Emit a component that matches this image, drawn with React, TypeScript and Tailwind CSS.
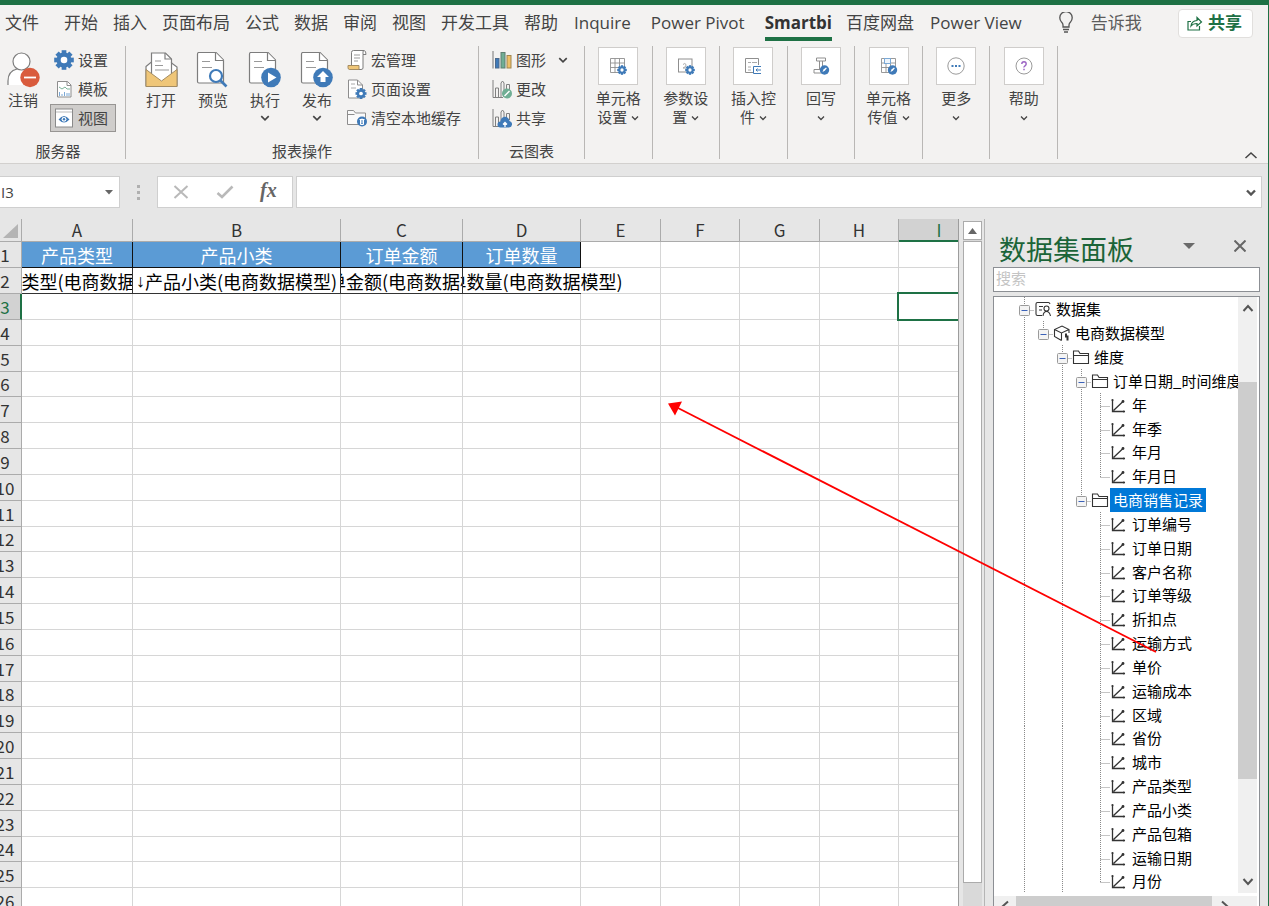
import React from 'react';

const UI_FONT = "font-['Open_Sans','Noto_Sans_CJK_SC',sans-serif]";
const CELL_FONT = "font-['Noto_Sans_CJK_SC',sans-serif]";

const BLUE = '#3f7ab8';
const LINE = '#7d7d7d';

function Chevron({ className = 'h-2 w-2' }: { className?: string }) {
  return (
    <svg viewBox="0 0 8 8" className={className} fill="none" stroke="#444" strokeWidth="1.300">
      <path d="M1 2.5 4 5.5 7 2.5" />
    </svg>
  );
}

function Gear({ cx, cy, r, hole = '#fff' }: { cx: number; cy: number; r: number; hole?: string }) {
  return (
    <g fill={BLUE}>
      <circle cx={cx} cy={cy} r={r * 0.76} />
      {[0, 45, 90, 135].map((a) => (
        <rect
          key={a}
          x={cx - r * 0.24}
          y={cy - r}
          width={r * 0.48}
          height={r * 2}
          transform={`rotate(${a} ${cx} ${cy})`}
        />
      ))}
      <circle cx={cx} cy={cy} r={r * 0.34} fill={hole} />
    </g>
  );
}

/* ---------- large ribbon icons, 36 x 36 ---------- */

function LogoutIcon() {
  return (
    <svg viewBox="0 0 36 36" className="h-9 w-9">
      <path d="M3 33V28q0-9 8-11M11 17q5 3 10 0l4 4-4 12H3" fill="#fff" stroke="none" />
      <path d="M3 33v-4q0-10 9-12" fill="none" stroke={LINE} strokeWidth="1.2" />
      <circle cx="16.500" cy="9.500" r="8.500" fill="#fff" stroke={LINE} strokeWidth="1.2" />
      <circle cx="25" cy="25.500" r="9.700" fill="#d95b3d" />
      <path d="M19 25.500h12" stroke="#fff" strokeWidth="1.8" />
    </svg>
  );
}

function PageBase() {
  return (
    <g>
      <path d="M2.500 2q0-1.500 1.500-1.500h17l7.500 7.500v23H4q-1.500 0-1.500-1.500z" fill="#fff" stroke={LINE} strokeWidth="1.2" />
      <path d="M20.500.5v8h8" fill="#fff" stroke={LINE} strokeWidth="1.2" />
      <path d="M7 9.500h8M7 15.500h10" stroke="#999" strokeWidth="1" />
    </g>
  );
}

function OpenIcon() {
  return (
    <svg viewBox="0 0 36 36" className="h-9 w-9">
      <path d="M3 14.500 8.500 10v-9h14l6 6v4l5.500 4v19H3z" fill="#fff" stroke={LINE} strokeWidth="1.2" />
      <path d="M8.500 10v13M28.500 10v12M22 1v6h6" fill="none" stroke={LINE} strokeWidth="1.2" />
      <path d="M12 9h6M12 13.500h8M12 18h14" stroke="#999" />
      <path d="M3 17.500 18.500 29 34 17.500V34.500H3z" fill="#efc678" stroke="#a48c62" />
    </svg>
  );
}

function PreviewIcon() {
  return (
    <svg viewBox="0 0 36 36" className="h-9 w-9">
      <PageBase />
      <circle cx="21" cy="24" r="6" fill="#fff" stroke={BLUE} strokeWidth="2.200" />
      <path d="m25.500 28.500 6 6" stroke={BLUE} strokeWidth="2.600" />
    </svg>
  );
}

function RunIcon() {
  return (
    <svg viewBox="0 0 36 36" className="h-9 w-9">
      <PageBase />
      <circle cx="24" cy="25.500" r="9.800" fill={BLUE} />
      <path d="m21 20.500 8.500 5-8.500 5z" fill="#fff" />
    </svg>
  );
}

function PublishIcon() {
  return (
    <svg viewBox="0 0 36 36" className="h-9 w-9">
      <PageBase />
      <circle cx="24" cy="25.500" r="9.800" fill={BLUE} />
      <path d="m24 19 6 6h-3.500v5h-5v-5H18z" fill="#fff" />
    </svg>
  );
}

/* ---------- small ribbon icons, 20 x 20 ---------- */

function SettingsIcon() {
  return (
    <svg viewBox="0 0 20 20" className="h-5 w-5">
      <Gear cx={10} cy={10} r={9.8} />
    </svg>
  );
}

function TemplateIcon() {
  return (
    <svg viewBox="0 0 20 20" className="h-5 w-5">
      <path d="M3.500 2.500h10l3.500 3.500v12H3.500z" fill="#fff" stroke="#8d8d8d" />
      <path d="M13 2.500v4h4" fill="none" stroke="#8d8d8d" />
      <path d="m5 8 3 2 3-2 2 2h3" fill="none" stroke="#7db39a" />
      <path d="M5.500 17v-4M8 17v-2M10.500 17v-4M13 17v-3M15 17v-3" stroke="#7ba9d6" />
    </svg>
  );
}

function ViewIcon() {
  return (
    <svg viewBox="0 0 20 20" className="h-5 w-5">
      <rect x="1.500" y="1" width="17" height="18" fill="#fff" stroke="#8a8a8a" />
      <path d="M2 4h16" stroke="#bbb" />
      <path d="M4.500 11.500q5.500-7 11 0-5.500 6-11 0z" fill={BLUE} />
      <circle cx="10" cy="11.300" r="2.400" fill="#fff" />
      <circle cx="10" cy="11.300" r="1.200" fill={BLUE} />
    </svg>
  );
}

function MacroIcon() {
  return (
    <svg viewBox="0 0 20 20" className="h-5 w-5">
      <path d="M4.500 15V2.500q0-2 2-2H17q2 0 2 4h-3V18q0 1.500-2 1.500H2.500" fill="#fff" stroke={LINE} />
      <path d="M16 4.500V2q0-1.500 1-1.500" fill="none" stroke={LINE} />
      <path d="M1 15.500h11v4H2.500q-1.500 0-1.500-2z" fill="#efc678" stroke="#a48c62" />
      <path d="M7 5h6M7 8h6M7 11h4" stroke="#999" />
    </svg>
  );
}

function PageSetupIcon() {
  return (
    <svg viewBox="0 0 20 20" className="h-5 w-5">
      <path d="M1.500 1h9l5 5v13h-14z" fill="#fff" stroke="#8d8d8d" />
      <path d="M10.500 1v5h5" fill="none" stroke="#8d8d8d" />
      <path d="M4 5h4M4 9h5" stroke="#aaa" />
      <Gear cx={14} cy={14.5} r={5.5} />
    </svg>
  );
}

function ClearCacheIcon() {
  return (
    <svg viewBox="0 0 20 20" className="h-5 w-5">
      <path d="M.5 16.500v-14h6l2 2.500h10v11.500z" fill="#fafafa" stroke="#8d8d8d" />
      <path d="M.5 6.500h7" stroke="#8d8d8d" />
      <circle cx="15" cy="13.500" r="5" fill={BLUE} />
      <path d="M12.500 11.500h5M13.500 12v4.500h3V12M15 10.500v5" fill="none" stroke="#fff" />
    </svg>
  );
}

function ChartIcon() {
  return (
    <svg viewBox="0 0 20 20" className="h-5 w-5">
      <path d="M1 1v17.500" stroke="#777" />
      <rect x="3.500" y="8.500" width="3.500" height="9.500" fill={BLUE} stroke="#4c6a8c" />
      <rect x="9" y="2.500" width="4" height="15.500" fill="#6fae94" stroke="#5e7f72" />
      <rect x="15" y="5.500" width="4" height="12.500" fill="#efc067" stroke="#a08650" />
    </svg>
  );
}

function OutlineBars() {
  return (
    <g fill="none" stroke="#808080">
      <path d="M1 1v17.500h10" />
      <path d="M3.500 18V9h3v9M9 18V4l1.500-2L12 4v14M14.500 12V5.500h3V12" />
    </g>
  );
}

function ChangeIcon() {
  return (
    <svg viewBox="0 0 20 20" className="h-5 w-5">
      <OutlineBars />
      <circle cx="15" cy="14.500" r="5" fill="#6fae94" />
      <path d="m12.500 17 5-5" stroke="#fff" strokeWidth="1.500" />
    </svg>
  );
}

function ShareCloudIcon() {
  return (
    <svg viewBox="0 0 20 20" className="h-5 w-5">
      <OutlineBars />
      <path d="M8.500 19.500a3 3 0 0 1 0-6 4.500 4.500 0 0 1 9-.5 3.300 3.300 0 0 1-.5 6.500z" fill={BLUE} />
      <path d="M13 19v-4M11 16.500l2-2 2 2" fill="none" stroke="#fff" strokeWidth="1.300" />
    </svg>
  );
}

/* ---------- boxed group icons, 18 x 18 ---------- */

function CellGrid() {
  return (
    <path
      d="M1.500 1.500h14v14h-14zM1.500 6h14M1.500 10.500h14M6 1.500v14M10.500 1.500v14"
      fill="#fff"
      stroke="#8f8f8f"
      strokeWidth=".9"
    />
  );
}

function CellSetIcon() {
  return (
    <svg viewBox="0 0 18 18" className="h-[18px] w-[18px]">
      <CellGrid />
      <Gear cx={13} cy={13} r={4.8} />
    </svg>
  );
}

function ParamIcon() {
  return (
    <svg viewBox="0 0 18 18" className="h-[18px] w-[18px]">
      <rect x="1.500" y="2" width="13.500" height="13" fill="#fff" stroke="#8f8f8f" />
      <path d="M6 7.500q2-2 3 0t-3 3.500h3" fill="none" stroke="#aaa" />
      <Gear cx={13} cy={13} r={4.8} />
    </svg>
  );
}

function ControlIcon() {
  return (
    <svg viewBox="0 0 18 18" className="h-[18px] w-[18px]">
      <path d="M9 15.500H1.500v-14h13V8" fill="#fff" stroke="#8f8f8f" />
      <path d="M4 5.500h3M8 5.500h5M4 10h3M4 13h3" stroke="#aaa" />
      <path d="M17 9.500H9.500v7H17M17 13h-5M13.500 11.500 12 13l1.500 1.500" fill="none" stroke={BLUE} />
    </svg>
  );
}

function PenBadge() {
  return (
    <g>
      <circle cx="12.500" cy="13" r="4.700" fill={BLUE} />
      <path d="m10.500 15 1-2.500 2.500-2 .8.8-2 2.500z" fill="#fff" />
    </g>
  );
}

function WriteBackIcon() {
  return (
    <svg viewBox="0 0 18 18" className="h-[18px] w-[18px]">
      <path d="M4.500 1h9v3h-9zM7.500 4v8.500M10.500 4v5M8 12.500H2v3.500h7" fill="none" stroke="#8f8f8f" />
      <PenBadge />
    </svg>
  );
}

function CellPassIcon() {
  return (
    <svg viewBox="0 0 18 18" className="h-[18px] w-[18px]">
      <CellGrid />
      <rect x="4.500" y="1.500" width="6" height="5" fill="#eef5fc" stroke="#7ba9d6" />
      <PenBadge />
    </svg>
  );
}

function MoreIcon() {
  return (
    <svg viewBox="0 0 18 18" className="h-[18px] w-[18px]">
      <circle cx="9" cy="9" r="8.200" fill="#fff" stroke="#8f8f8f" strokeWidth=".9" />
      <path d="M4.500 9h2M8 9h2M11.500 9h2" stroke={BLUE} strokeWidth="2" />
    </svg>
  );
}

function HelpIcon() {
  return (
    <svg viewBox="0 0 18 18" className="h-[18px] w-[18px]">
      <circle cx="9" cy="9" r="8" fill="#fff" stroke="#8f8f8f" strokeWidth=".9" />
      <path d="M6.800 7q0-2.200 2.200-2.200T11.200 7q0 1-1.200 1.800T9 10.500" fill="none" stroke="#9b64c4" strokeWidth="1.400" />
      <path d="M9 11.800v1.500" stroke="#9b64c4" strokeWidth="1.500" />
    </svg>
  );
}

/* ---------- ribbon ---------- */

const TABS = [
  '开始', '插入', '页面布局', '公式', '数据', '审阅', '视图', '开发工具', '帮助',
];
const ADDIN_TABS = ['Inquire', 'Power Pivot', 'Smartbi'];
const EXTRA_TABS = ['百度网盘', 'Power View'];

function Tab({ label }: { label: string }) {
  if (label === 'Smartbi') {
    return (
      <button className="h-9 border-b-4 border-[#1e7145] pt-1 font-bold text-[#333]">{label}</button>
    );
  }
  return <button className="h-9">{label}</button>;
}

function TabBar() {
  return (
    <nav className="flex h-9 items-center pr-[15px] pl-[5px] text-[17px] leading-6 whitespace-nowrap text-[#444]">
      <button className="mr-[25px]">文件</button>
      <div className="flex gap-[15px]">
        {TABS.map((t) => (
          <Tab key={t} label={t} />
        ))}
      </div>
      <div className="ml-4 flex gap-5">
        {ADDIN_TABS.map((t) => (
          <Tab key={t} label={t} />
        ))}
      </div>
      <div className="ml-[14px] flex gap-4">
        {EXTRA_TABS.map((t) => (
          <Tab key={t} label={t} />
        ))}
      </div>
      <button className="ml-9 flex items-center gap-[17px] text-[#5c5c5c]">
        <svg viewBox="0 0 16 22" className="h-[22px] w-4" fill="none" stroke="#555" strokeWidth="1.300">
          <path d="M5 15v-2q0-1.500-1.500-3A6.200 6.200 0 1 1 12.500 10Q11 11.500 11 13v2zM5 17.500h6M6 20h4" />
        </svg>
        告诉我
      </button>
      <button className="ml-auto flex h-[29px] items-center gap-[5px] rounded border border-[#e1dfdd] bg-white pr-[10px] pl-2 font-bold text-[#1e7145]">
        <svg viewBox="0 0 16 16" className="h-4 w-4" fill="none" stroke="#1e7145" strokeWidth="1.200">
          <path d="M4 6.500H1v8.500h11.500v-4M4 11q.5-5 6-5.500V2.500L14.500 7 10 11V8.500Q6 8.500 4 11z" />
        </svg>
        共享
      </button>
    </nav>
  );
}

function Group({ title, className, children }: { title?: string; className: string; children: React.ReactNode }) {
  return (
    <section className={`flex shrink-0 flex-col border-r border-[#b9b7b5] ${className}`}>
      <div className="flex flex-1">{children}</div>
      {title && <h2 className="text-center leading-4">{title}</h2>}
    </section>
  );
}

function BigButton({ icon, label, menu }: { icon: React.ReactNode; label: string; menu?: boolean }) {
  return (
    <button className="flex h-[86px] w-[52px] flex-col items-center gap-[3px] pt-[6px] leading-[18px]">
      {icon}
      {label}
      {menu && <Chevron className="mt-px h-2.5 w-2.5" />}
    </button>
  );
}

function SmallButton({ icon, label, active, menu }: { icon: React.ReactNode; label: string; active?: boolean; menu?: boolean }) {
  return (
    <button
      className={`flex h-7 items-center gap-1 border px-[3px] whitespace-nowrap ${
        active ? 'border-[#979593] bg-[#cfcdcb]' : 'border-transparent'
      }`}
    >
      {icon}
      {label}
      {menu && <Chevron className="ml-2 h-2.5 w-2.5" />}
    </button>
  );
}

function BoxButton({ icon, lines }: { icon: React.ReactNode; lines: string[] }) {
  return (
    <div className="flex flex-1 justify-center border-r border-[#b9b7b5]">
      <button className="flex flex-col items-center self-start pt-px leading-[19px]">
        <span className="mb-1 flex h-[38px] w-10 items-center justify-center border border-[#cfcdcb] bg-white">
          {icon}
        </span>
        <span>{lines[0]}</span>
        <span className="flex h-[19px] items-center gap-1">
          {lines[1]}
          <Chevron />
        </span>
      </button>
    </div>
  );
}

function Ribbon() {
  return (
    <div className="flex border-b border-[#d2d0ce] pt-[5px] pb-1 text-[15px] text-[#444]">
      <div className="flex h-[113px] flex-1">
        <Group title="服务器" className="w-[126px] pr-[9px]">
          <div className="-ml-[3px]">
            <BigButton icon={<LogoutIcon />} label="注销" />
          </div>
          <div className="ml-px flex flex-1 flex-col gap-px">
            <SmallButton icon={<SettingsIcon />} label="设置" />
            <SmallButton icon={<TemplateIcon />} label="模板" />
            <SmallButton icon={<ViewIcon />} label="视图" active />
          </div>
        </Group>
        <Group title="报表操作" className="w-[353px]">
          <div className="ml-[9px] flex">
            <BigButton icon={<OpenIcon />} label="打开" />
            <BigButton icon={<PreviewIcon />} label="预览" />
            <BigButton icon={<RunIcon />} label="执行" menu />
            <BigButton icon={<PublishIcon />} label="发布" menu />
          </div>
          <div className="flex flex-col gap-px">
            <SmallButton icon={<MacroIcon />} label="宏管理" />
            <SmallButton icon={<PageSetupIcon />} label="页面设置" />
            <SmallButton icon={<ClearCacheIcon />} label="清空本地缓存" />
          </div>
        </Group>
        <Group title="云图表" className="w-[106px]">
          <div className="ml-[9px] flex flex-col gap-px">
            <SmallButton icon={<ChartIcon />} label="图形" menu />
            <SmallButton icon={<ChangeIcon />} label="更改" />
            <SmallButton icon={<ShareCloudIcon />} label="共享" />
          </div>
        </Group>
        <div className="flex w-[473px] shrink-0">
          <BoxButton icon={<CellSetIcon />} lines={['单元格', '设置']} />
          <BoxButton icon={<ParamIcon />} lines={['参数设', '置']} />
          <BoxButton icon={<ControlIcon />} lines={['插入控', '件']} />
          <BoxButton icon={<WriteBackIcon />} lines={['回写', '']} />
          <BoxButton icon={<CellPassIcon />} lines={['单元格', '传值']} />
          <BoxButton icon={<MoreIcon />} lines={['更多', '']} />
          <BoxButton icon={<HelpIcon />} lines={['帮助', '']} />
        </div>
        <button aria-label="折叠功能区" className="mr-[10px] ml-auto self-end">
          <svg viewBox="0 0 14 8" className="h-2 w-[14px]" fill="none" stroke="#444" strokeWidth="1.500">
            <path d="m1.500 7 5.500-5L12.500 7" />
          </svg>
        </button>
      </div>
    </div>
  );
}

function FormulaBar() {
  return (
    <div className="flex h-[55px] items-start bg-[#e6e6e6] pt-3 pr-[6px]">
      <div className="flex h-8 w-[120px] items-center border border-l-0 border-[#cfcfcf] bg-white pr-[6px]">
        <input aria-label="名称框" defaultValue="I3" className="w-full min-w-0 bg-transparent pl-px text-[15px] text-[#444] outline-none" />
        <svg viewBox="0 0 8 5" className="h-[5px] w-2 shrink-0" fill="#666">
          <path d="M0 0h8L4 4.500z" />
        </svg>
      </div>
      <div className="flex h-8 w-[37px] flex-col items-center justify-center gap-[3px]">
        <i className="h-[3px] w-[3px] bg-[#b0b0b0]" />
        <i className="h-[3px] w-[3px] bg-[#b0b0b0]" />
        <i className="h-[3px] w-[3px] bg-[#b0b0b0]" />
      </div>
      <div className="mr-[3px] flex h-8 w-[136px] items-center justify-around border border-[#cfcfcf] bg-white px-[2px]">
        <button aria-label="取消">
          <svg viewBox="0 0 16 14" className="h-[14px] w-4" stroke="#b9b9b9" strokeWidth="2" fill="none">
            <path d="m1.500 1 13 12M14.500 1l-13 12" />
          </svg>
        </button>
        <button aria-label="输入">
          <svg viewBox="0 0 18 14" className="h-[14px] w-[18px]" stroke="#b9b9b9" strokeWidth="2.600" fill="none">
            <path d="m1.500 8 4.500 4L16.500 1.500" />
          </svg>
        </button>
        <button aria-label="插入函数" className="pb-1 font-['Liberation_Serif',serif] text-[20px] leading-6 font-bold text-[#666] italic">
          fx
        </button>
      </div>
      <div className="flex h-8 flex-1 items-center border border-[#cfcfcf] bg-white pr-[5px]">
        <input aria-label="编辑栏" className="min-w-0 flex-1 bg-transparent px-2 outline-none" />
        <svg viewBox="0 0 10 7" className="h-[7px] w-[10px]" fill="none" stroke="#555" strokeWidth="2.400">
          <path d="m1 1.500 4 4 4-4" />
        </svg>
      </div>
    </div>
  );
}

/* ---------- sheet ---------- */

const COLUMNS = [
  { name: 'A', width: 'w-[111px]' },
  { name: 'B', width: 'w-[208px]' },
  { name: 'C', width: 'w-[122px]' },
  { name: 'D', width: 'w-[118px]' },
  { name: 'E', width: 'w-[80px]' },
  { name: 'F', width: 'w-[79px]' },
  { name: 'G', width: 'w-[80px]' },
  { name: 'H', width: 'w-[79px]' },
  { name: 'I', width: 'w-[80px]' },
];
const HEADINGS = ['产品类型', '产品小类', '订单金额', '订单数量'];
const ROWS = Array.from({ length: 26 }, (_, i) => i + 1);

function Cell({ row, col }: { row: number; col: number }) {
  if (row === 1 && col < 4) {
    return (
      <td className="border-r border-b border-[#111] bg-[#5b9bd5] p-0 text-center text-white">{HEADINGS[col]}</td>
    );
  }
  if (row === 2 && col < 4) {
    return (
      <td className={`border-b border-[#333] p-0 text-black ${col < 3 ? 'border-r' : ''}`}>
        <div
          className={`flex justify-center whitespace-nowrap ${
            col < 3 ? 'overflow-hidden' : '[clip-path:inset(0_-60px_0_0)]'
          }`}
        >
          <span className="shrink-0 font-['Liberation_Serif',serif]">↓</span>
          <span className="shrink-0">{HEADINGS[col]}(电商数据模型)</span>
        </div>
      </td>
    );
  }
  const selected = row === 3 && col === 8;
  return (
    <td className={`border-r border-b border-[#d6d6d6] p-0 ${selected ? 'relative' : ''}`}>
      {selected && (
        <span className="absolute -top-[2px] right-0 -bottom-[2px] -left-[2px] border-2 border-[#1e7145]" />
      )}
    </td>
  );
}

function Sheet() {
  return (
    <div className={`min-w-0 flex-1 overflow-x-clip border-r border-[#9d9d9d] bg-white ${CELL_FONT}`}>
      <table className="w-[979px] table-fixed border-separate border-spacing-0 text-[18px] leading-6 text-[#333]">
        <thead>
          <tr className="h-[23px] bg-[#e6e6e6] text-[17px] leading-5">
            <th scope="col" aria-label="全选" className="w-[22px] border-r border-b border-[#ababab] p-0">
              <svg viewBox="0 0 21 22" className="h-[22px] w-[21px]">
                <path d="M18 5v14H3z" fill="#b4b4b4" />
              </svg>
            </th>
            {COLUMNS.map((c) => (
              <th
                key={c.name}
                scope="col"
                className={`p-0 font-normal ${c.width} ${
                  c.name === 'I'
                    ? 'border-b-2 border-[#1e7145] bg-[#d2d2d2] text-[#1e7145]'
                    : 'border-r border-b border-[#ababab]'
                }`}
              >
                {c.name}
              </th>
            ))}
          </tr>
        </thead>
        <tbody>
          {ROWS.map((r) => (
            <tr key={r} className={r % 6 === 0 ? 'h-[25px]' : 'h-[26px]'}>
              <th
                scope="row"
                className={`border-b p-0 text-[17px] font-normal ${
                  r === 3
                    ? 'border-r-2 border-r-[#1e7145] border-b-[#ababab] bg-[#d2d2d2] text-[#1e7145]'
                    : 'border-r border-[#ababab] bg-[#e6e6e6]'
                }`}
              >
                <div className="flex w-[10px] justify-center">{r}</div>
              </th>
              {COLUMNS.map((c, i) => (
                <Cell key={c.name} row={r} col={i} />
              ))}
            </tr>
          ))}
        </tbody>
      </table>
    </div>
  );
}

function SheetScrollbar() {
  return (
    <div className="flex w-[26px] flex-col border-r border-[#b5b5b5] bg-[#e6e6e6] pt-[2px] pr-[2px] pl-1">
      <button aria-label="向上滚动" className="flex h-[19px] items-center justify-center border border-[#ababab] bg-white">
        <svg viewBox="0 0 9 6" className="h-[6px] w-[9px]" fill="#666">
          <path d="M0 6h9L4.500 0z" />
        </svg>
      </button>
      <div className="flex flex-1 flex-col bg-[#d9d9d9] pb-[23px]">
        <div className="mt-px flex-1 border border-[#ababab] bg-white" />
      </div>
    </div>
  );
}

/* ---------- data set pane ---------- */

type Kind = 'set' | 'model' | 'folder' | 'field';
type Guide = 'full' | 'half' | 'none';
interface Node {
  label: string;
  kind: Kind;
  guides: Guide[];
  selected?: boolean;
}

function fields(labels: string[], parent: Guide): Node[] {
  return labels.map((label, i) => ({
    label,
    kind: 'field' as const,
    guides: ['full', 'none', 'full', parent, i === labels.length - 1 ? 'half' : 'full'] as Guide[],
  }));
}

const TREE: Node[] = [
  { label: '数据集', kind: 'set', guides: ['full'] },
  { label: '电商数据模型', kind: 'model', guides: ['full', 'half'] },
  { label: '维度', kind: 'folder', guides: ['full', 'none', 'full'] },
  { label: '订单日期_时间维度', kind: 'folder', guides: ['full', 'none', 'full', 'full'] },
  ...fields(['年', '年季', '年月', '年月日'], 'full'),
  { label: '电商销售记录', kind: 'folder', guides: ['full', 'none', 'full', 'half'], selected: true },
  ...fields(
    [
      '订单编号', '订单日期', '客户名称', '订单等级', '折扣点', '运输方式', '单价', '运输成本',
      '区域', '省份', '城市', '产品类型', '产品小类', '产品包箱', '运输日期', '月份',
    ],
    'none',
  ),
];

function NodeIcon({ kind }: { kind: Kind }) {
  return (
    <svg viewBox="0 0 18 16" className="h-4 w-[18px] shrink-0" fill="none" stroke="#333" strokeWidth="1.100">
      {kind === 'set' && (
        <path d="M8 14.500H3.500q-1.500 0-1.500-1.500V3q0-1.500 1.500-1.500h11q1 0 1.500 1.500M5 5.500h4M5 9h3M12.500 5a2.500 2.500 0 1 1 0 5 2.500 2.500 0 0 1 0-5zM9 15q.5-4.500 3.500-4.500t4 4.500" />
      )}
      {kind === 'model' && (
        <g>
          <path d="M8.500 15.500 1.500 11.500V4.500L9 1l7 3.500V8M1.500 4.500l7 3.500L16 4.500M8.500 8v7.500" />
          <path d="M13 8.500v4M14.500 10.500v5" strokeWidth="2" />
        </g>
      )}
      {kind === 'folder' && <path d="M1.500 14.500V2h5l1.500 2.500h8.500v10zM1.500 6.500h15" />}
      {kind === 'field' && (
        <g>
          <path d="M2.500 3v11.500H14M3.500 13.500 13 4.500" strokeWidth="1.300" />
          <circle cx="2.500" cy="3" r="1.100" fill="#333" stroke="none" />
          <circle cx="13" cy="4.500" r="1.400" fill="#333" stroke="none" />
          <circle cx="14" cy="14.500" r="1.100" fill="#333" stroke="none" />
        </g>
      )}
    </svg>
  );
}

function GuideCell({ guide, branch, expander }: { guide: Guide; branch: boolean; expander: boolean }) {
  return (
    <svg viewBox="0 0 19 24" className="h-6 w-[19px] shrink-0" fill="none">
      <g stroke="#8a8a8a" strokeDasharray="1 1" strokeWidth="1">
        {guide === 'full' && <path d="M9.500 0v24" />}
        {guide === 'half' && <path d="M9.500 0v13" />}
        {branch && <path d="M9.500 13.500H19" />}
      </g>
      {expander && (
        <g>
          <rect x="4.500" y="8.500" width="10" height="10" rx="1" fill="#f4f4f4" stroke="#9a9a9a" />
          <path d="M6.500 13.500h6" stroke="#3c62b8" />
        </g>
      )}
    </svg>
  );
}

function TreeRow({ node, index }: { node: Node; index: number }) {
  const last = node.guides.length - 1;
  return (
    <li className={`flex items-center ${index % 6 === 5 ? 'h-[23px]' : 'h-6'}`}>
      {node.guides.map((g, i) => (
        <GuideCell key={i} guide={g} branch={i === last} expander={i === last && node.kind !== 'field'} />
      ))}
      <NodeIcon kind={node.kind} />
      <button
        className={`ml-px h-full px-[3px] text-left leading-[22px] whitespace-nowrap ${
          node.selected ? 'bg-[#0078d7] text-white' : 'text-black'
        }`}
      >
        {node.label}
      </button>
    </li>
  );
}

function DataPane() {
  return (
    <aside className="w-[284px] shrink-0 border-r border-[#1e7145] bg-[#e6e6e6] pr-2 pl-2">
      <header className="flex h-12 items-center pt-3 pr-[14px] pl-[6px]">
        <h2 className={`text-[27px] leading-9 text-[#1b6438] ${CELL_FONT}`}>数据集面板</h2>
        <button aria-label="面板选项" className="ml-auto pb-[6px]">
          <svg viewBox="0 0 12 6" className="h-[6px] w-3" fill="#6a6a6a">
            <path d="M0 0h12L6 6z" />
          </svg>
        </button>
        <button aria-label="关闭" className="ml-[39px] pb-[6px]">
          <svg viewBox="0 0 12 12" className="h-3 w-3" stroke="#666" strokeWidth="2">
            <path d="m.5.5 11 11M11.500.5l-11 11" />
          </svg>
        </button>
      </header>
      <input
        aria-label="搜索"
        placeholder="搜索"
        className="block h-[25px] w-full border border-[#8c8f94] bg-white px-[2px] pb-1 text-[15px] leading-5 outline-none placeholder:text-[#c4c4c4]"
      />
      <div className="mt-1 border border-[#8c8f94] bg-white pr-[2px]">
        <div className="flex pb-[3px]">
          <ul className={`min-w-0 flex-1 overflow-x-clip pl-[21px] text-[15px] ${CELL_FONT}`}>
            {TREE.map((n, i) => (
              <TreeRow key={i} node={n} index={i} />
            ))}
          </ul>
          <div className="flex w-[19px] shrink-0 flex-col items-center bg-[#f0f0f0]">
            <button aria-label="向上" className="flex h-[22px] items-center">
              <svg viewBox="0 0 12 8" className="h-2 w-3" fill="none" stroke="#555" strokeWidth="2">
                <path d="m1.500 7 4.500-5 4.500 5" />
              </svg>
            </button>
            <div className="mt-[63px] mb-[92px] w-full flex-1 bg-[#cdcdcd]" />
            <button aria-label="向下" className="flex h-[22px] items-center">
              <svg viewBox="0 0 12 8" className="h-2 w-3" fill="none" stroke="#555" strokeWidth="2">
                <path d="m1.500 1 4.500 5L10.500 1" />
              </svg>
            </button>
          </div>
        </div>
        <div className="flex h-[19px] items-center bg-[#f0f0f0] pr-[19px]">
          <button aria-label="向左" className="flex w-[22px] justify-center">
            <svg viewBox="0 0 8 12" className="h-3 w-2" fill="none" stroke="#555" strokeWidth="2">
              <path d="M7 1.500 2 6l5 4.500" />
            </svg>
          </button>
          <div className="h-full flex-1 bg-[#cdcdcd]" />
          <button aria-label="向右" className="flex w-[26px] justify-center">
            <svg viewBox="0 0 8 12" className="h-3 w-2" fill="none" stroke="#555" strokeWidth="2">
              <path d="m1 1.500 5 4.500-5 4.500" />
            </svg>
          </button>
        </div>
      </div>
    </aside>
  );
}

export default function App() {
  return (
    <div className={`relative flex h-screen flex-col overflow-hidden bg-[#e6e6e6] ${UI_FONT}`}>
      <div className="shrink-0 border-t-[5px] border-r border-[#1e7145] bg-[#f3f2f1]">
        <TabBar />
        <Ribbon />
        <FormulaBar />
      </div>
      <main className="flex min-h-0 flex-1">
        <Sheet />
        <SheetScrollbar />
        <DataPane />
      </main>
      <svg className="pointer-events-none absolute top-0 left-0 h-[906px] w-[1269px]" viewBox="0 0 1269 906">
        <path d="M1156 652 678 408" stroke="#fe0000" strokeWidth="1.800" />
        <path d="m668 403.500 14-2-7 14z" fill="#fe0000" />
      </svg>
    </div>
  );
}
